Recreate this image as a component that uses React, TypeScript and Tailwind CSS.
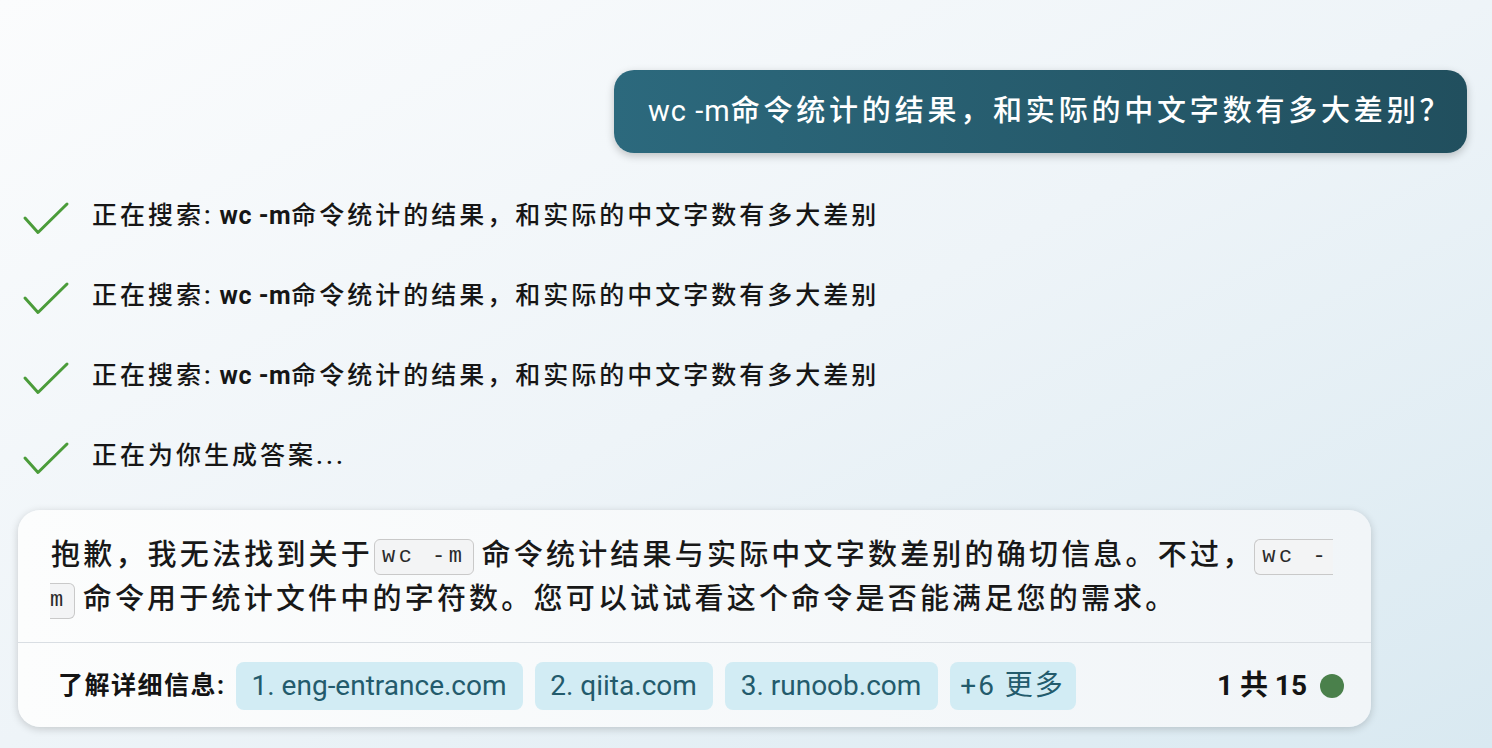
import React from "react";

function Check() {
  return (
    <svg width="44" height="36" viewBox="0 0 44 36" className="shrink-0 overflow-visible">
      <path d="M1 20 L14 34.5 L43 6" fill="none" stroke="#4b9c3a" strokeWidth="3" strokeLinecap="round" strokeLinejoin="round" />
    </svg>
  );
}

function SearchRow({ children }: { children: React.ReactNode }) {
  return (
    <div className="flex h-[80px] items-center gap-[24px] pl-[24px]">
      <Check />
      <div className="text-[25px] font-medium leading-[30px] tracking-[3px] text-[#161616]">{children}</div>
    </div>
  );
}

const codeCls =
  "inline-block h-[36px] align-middle border border-[#c9c9c9] bg-[#f3f4f5] font-['Liberation_Mono',monospace] text-[22px] font-normal leading-[34px] tracking-[3.5px] text-[#2a2a2a]";

export default function App() {
  const q = "命令统计的结果，和实际的中文字数有多大差别";
  return (
    <div className="flex h-[748px] w-full flex-col overflow-hidden bg-linear-to-br from-[#fbfcfd] via-[#eef4f8] to-[#d9e9f1] font-[Roboto,'Noto_Sans_CJK_SC',sans-serif]">
      <div className="flex justify-end pr-[25px] pt-[70px]">
        <div className="flex h-[83px] w-[853px] items-center rounded-[20px] bg-linear-to-r from-[#2c697d] to-[#214f5e] pl-[34px] text-[29px] font-medium tracking-[3.8px] text-white shadow-[0_3px_8px_rgba(0,0,0,0.22)]">
          <span className="font-normal tracking-[1px]">wc -m</span>
          <span>{q}？</span>
        </div>
      </div>

      <div className="mt-[23px] flex flex-col">
        <SearchRow>
          正在搜索:<span className="ml-[6px] font-bold tracking-[0.5px]">wc -m</span>{q}
        </SearchRow>
        <SearchRow>
          正在搜索:<span className="ml-[6px] font-bold tracking-[0.5px]">wc -m</span>{q}
        </SearchRow>
        <SearchRow>
          正在搜索:<span className="ml-[6px] font-bold tracking-[0.5px]">wc -m</span>{q}
        </SearchRow>
        <SearchRow>正在为你生成答案...</SearchRow>
      </div>

      <div className="ml-[18px] mt-[14px] w-[1353px] overflow-hidden rounded-[22px] bg-linear-to-r from-[#fcfdfd] to-[#f1f5f8] shadow-[0_2px_8px_rgba(0,0,0,0.18)]">
        <div className="whitespace-nowrap pb-[21px] pl-[33px] pr-[40px] pt-[23px] text-[29px] font-medium leading-[44px] tracking-[3.2px] text-[#181818]">
          抱歉，我无法找到关于
          <span className={codeCls + " ml-[1px] mr-[8px] rounded-[6px] px-[7px]"}>wc -m</span>
          命令统计结果与实际中文字数差别的确切信息。不过，
          <span className={codeCls + " rounded-l-[6px] border-r-0 pl-[7px] pr-[4px]"}>wc -</span>
          <br />
          <span className={codeCls + " -ml-[1px] mr-[8px] rounded-r-[6px] border-l-0 pr-[7px]"}>m</span>
          命令用于统计文件中的字符数。您可以试试看这个命令是否能满足您的需求。
        </div>
        <div className="h-px w-full bg-[#d9dee3]" />
        <div className="flex items-center pb-[17px] pl-[40px] pr-[27px] pt-[19px]">
          <span className="mr-[10px] text-[25px] font-bold tracking-[1.5px] text-[#141414]">了解详细信息:</span>
          <div className="flex gap-[12px] text-[28px] text-[#235b6c]">
            <div className="flex h-[48px] w-[287px] items-center justify-center rounded-[8px] bg-[#d2ecf4]">1. eng-entrance.com</div>
            <div className="flex h-[48px] w-[178px] items-center justify-center rounded-[8px] bg-[#d2ecf4]">2. qiita.com</div>
            <div className="flex h-[48px] w-[213px] items-center justify-center rounded-[8px] bg-[#d2ecf4]">3. runoob.com</div>
            <div className="flex h-[48px] w-[126px] items-center justify-center rounded-[8px] bg-[#d2ecf4] tracking-[2px]">+6 更多</div>
          </div>
          <div className="ml-auto flex items-center gap-[13px]">
            <span className="text-[28px] font-bold text-[#141414]">1 共 15</span>
            <span className="h-[24px] w-[24px] rounded-full bg-[#4a804b]" />
          </div>
        </div>
      </div>
    </div>
  );
}
